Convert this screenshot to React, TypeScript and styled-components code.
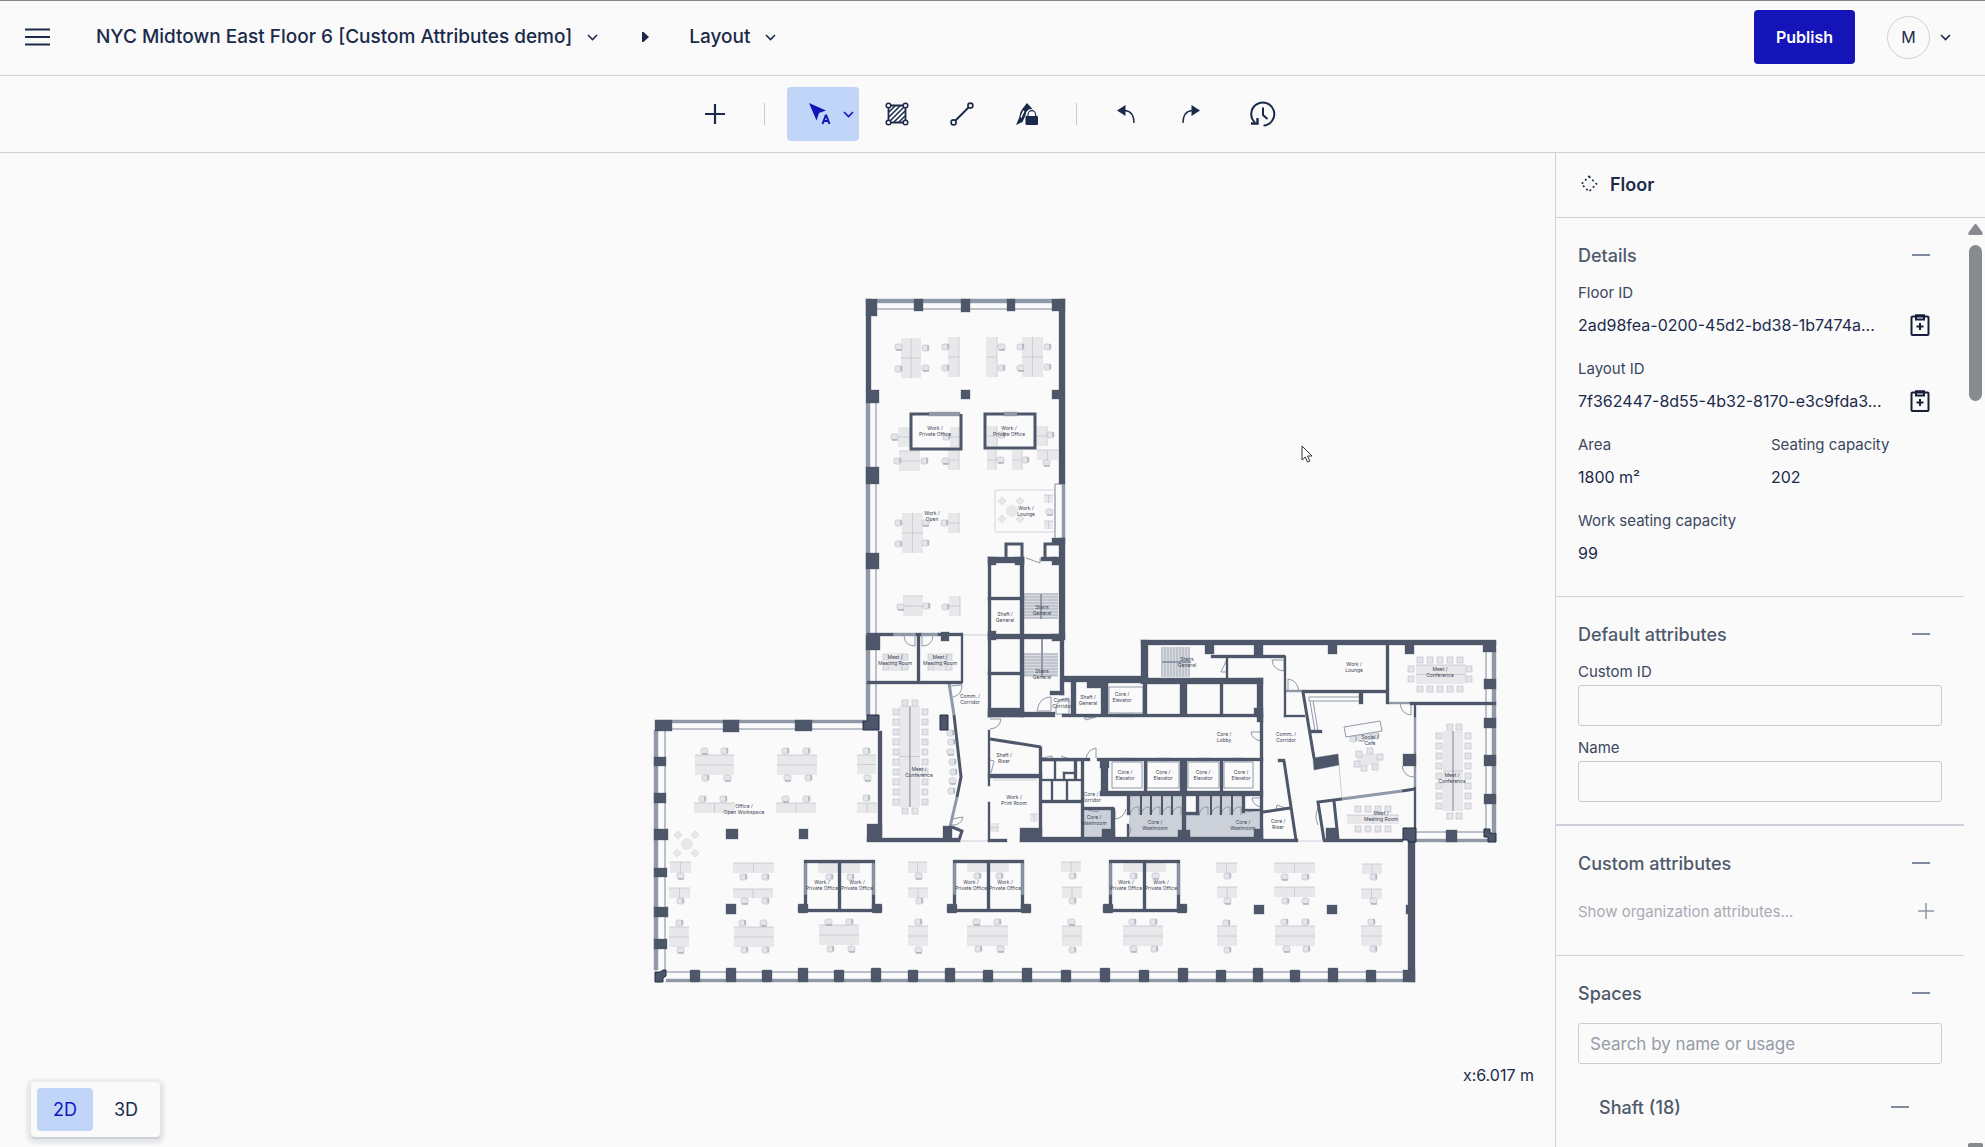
import React from "react";
import styled, { createGlobalStyle } from "styled-components";

const ink = "#1b2a4a";
const line = "#cdd0d9";
const wall = "#4e576a";
const glass = "#9099a8";
const thin = "#a6adb9";
const desk = "#e8e8eb";

const Global = createGlobalStyle`
  * { box-sizing: border-box; }
  body { margin: 0; background: #fafafa; }
  button, input { font: inherit; color: inherit; }
  button { background: none; border: 0; padding: 0; cursor: pointer; }
  svg { display: block; }
  h1, h2, dl, dt, dd { margin: 0; font: inherit; }
`;

const Page = styled.div`
  height: 100vh;
  display: flex;
  flex-direction: column;
  overflow: hidden;
  background: #fafafa;
  color: ${ink};
  font-family: Inter, "Liberation Sans", sans-serif;
  font-size: 16px;
`;

const Header = styled.header`
  display: flex;
  align-items: center;
  flex: none;
  height: 76px;
  padding: 0 34px 2px 24px;
  border-top: 1px solid #85868f;
  border-bottom: 1px solid ${line};
`;

const MenuButton = styled.button`
  width: 27px;
  margin-right: 45px;
`;

const Crumb = styled.button`
  display: flex;
  align-items: center;
  gap: 15px;
  font-size: 19px;
  line-height: 24px;
  font-weight: 500;
  white-space: nowrap;
`;

const CrumbArrow = styled.span`
  padding: 0 40px 0 44px;
`;

const Account = styled.div`
  display: flex;
  align-items: center;
  margin-left: auto;
`;

const Publish = styled.button`
  height: 54px;
  padding: 0 22px;
  border-radius: 4px;
  background: #1414b8;
  color: #fff;
  font-size: 16px;
  font-weight: 600;
`;

const Profile = styled.button`
  display: flex;
  align-items: center;
  gap: 10px;
  margin-left: 32px;
`;

const Avatar = styled.span`
  display: grid;
  place-items: center;
  width: 43px;
  height: 43px;
  border: 1px solid #d0d2d6;
  border-radius: 50%;
`;

const Toolbar = styled.div`
  display: flex;
  flex: none;
  align-items: center;
  justify-content: center;
  gap: 11px;
  height: 77px;
  padding-right: 8px;
  border-bottom: 1px solid ${line};
`;

const Tool = styled.button<{ $active?: boolean; $apart?: boolean }>`
  display: flex;
  align-items: center;
  justify-content: center;
  gap: 12px;
  width: ${(p) => (p.$active ? 72 : 54)}px;
  height: 54px;
  margin-left: ${(p) => (p.$apart ? 7 : 0)}px;
  padding-left: ${(p) => (p.$active ? 17 : 0)}px;
  border-radius: 4px;
  background: ${(p) => (p.$active ? "#c1d5f9" : "transparent")};
  color: ${(p) => (p.$active ? "#1414b8" : ink)};
`;

const ToolDivider = styled.span`
  width: 1px;
  height: 22px;
  margin: 0 11px;
  background: #c6cad2;
`;

const Body = styled.div`
  display: flex;
  flex: 1;
  min-height: 0;
`;

const Canvas = styled.main`
  position: relative;
  flex: 1;
  min-width: 0;
`;

const Plan = styled.svg`
  width: 100%;
  height: 100%;
`;

const Pointer = styled.svg`
  position: absolute;
  left: 1301px;
  top: 292px;
`;

const Coordinates = styled.output`
  position: absolute;
  right: 21px;
  bottom: 60px;
  line-height: 24px;
`;

const ViewSwitch = styled.div`
  position: absolute;
  left: 31px;
  bottom: 10px;
  display: flex;
  gap: 5px;
  padding: 6px;
  border-radius: 4px;
  background: #fafafa;
  box-shadow: 0 2px 2px rgba(40, 50, 70, 0.16), 0 2px 3px 5px rgba(40, 50, 70, 0.08);
`;

const ViewButton = styled.button<{ $on?: boolean }>`
  width: 56px;
  height: 43px;
  border-radius: 4px;
  font-size: 18px;
  background: ${(p) => (p.$on ? "#c1d5f9" : "transparent")};
  color: ${(p) => (p.$on ? "#1414c8" : ink)};
`;

const Panel = styled.aside`
  display: flex;
  flex: none;
  flex-direction: column;
  width: 430px;
  border-left: 1px solid ${line};
`;

const PanelHeader = styled.div`
  display: flex;
  flex: none;
  align-items: center;
  gap: 12px;
  height: 65px;
  padding: 0 0 2px 24px;
  border-bottom: 1px solid ${line};
  font-size: 18px;
  font-weight: 600;
`;

const PanelBody = styled.div`
  display: flex;
  flex: 1;
  min-height: 0;
`;

const Sections = styled.div`
  flex: 1;
  overflow: hidden;
`;

const Scrollbar = styled.div`
  display: flex;
  flex-direction: column;
  justify-content: space-between;
  align-items: center;
  width: 21px;
  padding: 6px 0 0 2px;
  overflow: hidden;
`;

const ScrollTop = styled.div`
  display: flex;
  flex-direction: column;
  align-items: center;
  gap: 10px;
`;

const Thumb = styled.div`
  width: 13px;
  height: 156px;
  border-radius: 7px;
  background: #878a8f;
`;

const ScrollEnd = styled.div`
  width: 15px;
  height: 4px;
  border-radius: 2px 2px 0 0;
  background: #878a8f;
`;

const Section = styled.section<{ $end: number; $rule?: number }>`
  padding: 25px 22px ${(p) => p.$end}px;
  border-bottom: ${(p) => p.$rule ?? 1}px solid ${line};
`;

const SectionHead = styled.div<{ $gap: number; $inset?: number }>`
  display: flex;
  align-items: center;
  justify-content: space-between;
  height: 24px;
  margin: 0 ${(p) => p.$inset ?? 0}px ${(p) => p.$gap}px;
  padding-right: 12px;
  color: #4f596b;
  font-size: 18px;
  font-weight: 500;
`;

const Facts = styled.dl`
  display: grid;
  grid-template-columns: 193px 1fr;
  row-gap: 22px;
`;

const Fact = styled.div<{ $wide?: boolean }>`
  grid-column: ${(p) => (p.$wide ? "1 / -1" : "auto")};
  display: grid;
  row-gap: 10px;
`;

const Term = styled.dt`
  font-size: 15px;
  line-height: 20px;
  color: #3b4760;
`;

const Value = styled.dd`
  display: flex;
  align-items: center;
  justify-content: space-between;
  height: 24px;
  padding-right: 12px;
`;

const Field = styled.div`
  display: flex;
  flex-direction: column;
  gap: 3px;
  & + & { margin-top: 12px; }
`;

const Label = styled.label`
  font-size: 15px;
  line-height: 20px;
  color: #3b4760;
`;

const Input = styled.input`
  width: 100%;
  height: 41px;
  padding: 0 11px;
  border: 1px solid #c9cbd1;
  border-radius: 3px;
  background: transparent;
  font-size: 17px;
  &::placeholder { color: #959ba7; opacity: 1; }
`;

const ShowMore = styled.button`
  display: flex;
  align-items: center;
  justify-content: space-between;
  width: 100%;
  height: 24px;
  padding-right: 8px;
  color: #a7abb4;
  font-size: 15px;
`;

const Group = styled.div`
  margin-top: 31px;
`;

const Chevron = () => (
  <svg width="11" height="7" viewBox="0 0 11 7" fill="none" stroke="currentColor" strokeWidth="1.6">
    <path d="M1 1l4.5 4.5L10 1" />
  </svg>
);

const Minus = () => (
  <svg width="18" height="18" viewBox="0 0 18 18" fill="none" stroke="#7f8a9a" strokeWidth="2">
    <path d="M0 9h18" />
  </svg>
);

const Clipboard = () => (
  <svg width="20" height="22" viewBox="0 0 20 22" fill="none" stroke="#141f36" strokeWidth="2">
    <rect x="1.5" y="2.5" width="17" height="18.5" rx="1" />
    <path d="M6 1.2h8v4.3H6zM10 9v7M6.5 12.500h7" />
  </svg>
);

type Box = [number, number, number, number];

/* Wall outlines as x1, y1, x2, y2 */
const solids: Box[] = [
  [866, 299, 877, 316], [866, 299, 871, 390], [1059, 299, 1065, 484],
  [914, 299, 923, 311], [961, 299, 970, 312], [1007, 299, 1015, 311], [1052, 299, 1065, 311],
  [866, 390, 879, 403], [866, 467, 879, 484], [866, 553, 879, 569], [866, 635, 880, 650],
  [961, 390, 970, 399], [1052, 390, 1060, 399],
  [1052, 538, 1065, 544], [1059, 538, 1065, 640], [1052, 557, 1060, 565],
  [988, 557, 991, 717], [988, 557, 1024, 563], [1020, 557, 1024, 717], [1041, 557, 1056, 561],
  [988, 597, 1024, 600], [988, 634, 1065, 639], [988, 672, 1024, 675], [988, 708, 1024, 717],
  [988, 712, 1055, 717], [988, 557, 996, 565], [1015, 557, 1024, 565], [988, 631, 996, 640], [1052, 634, 1060, 641],
  [1060, 638, 1064, 695], [1050, 691, 1064, 695],
  [867, 633, 893, 636], [916, 633, 921, 636], [938, 633, 962, 636], [867, 681, 962, 684],
  [917, 634, 920, 683], [961, 633, 963, 683], [941, 632, 949, 641],
  [878, 731, 882, 835], [867, 824, 882, 841], [867, 838, 960, 842], [943, 826, 952, 841],
  [988, 730, 990, 786], [988, 802, 990, 841], [988, 774, 1042, 778], [1039, 747, 1042, 840],
  [988, 839, 1007, 842], [1020, 828, 1042, 841], [1020, 837, 1263, 842],
  [1041, 759, 1082, 761], [1041, 779, 1082, 781], [1041, 800, 1082, 803], [1054, 760, 1056, 780],
  [1074, 760, 1077, 780], [1051, 780, 1053, 801], [1066, 780, 1068, 801], [1081, 760, 1084, 840],
  [1063, 772, 1076, 774], [1063, 772, 1065, 780],
  [1062, 676, 1148, 682], [1141, 640, 1148, 682], [1141, 640, 1496, 645], [1205, 645, 1214, 654],
  [1211, 655, 1285, 658], [1254, 645, 1263, 656], [1226, 658, 1228, 680],
  [1071, 678, 1076, 716], [1087, 680, 1108, 688], [1101, 680, 1108, 716], [1108, 678, 1146, 683], [1143, 678, 1147, 716],
  [1141, 678, 1263, 684], [1180, 680, 1187, 716], [1220, 680, 1223, 716], [1257, 678, 1263, 722], [1254, 708, 1263, 716],
  [1062, 714, 1263, 717], [1260, 716, 1263, 840],
  [1041, 758, 1090, 761], [1097, 758, 1263, 761], [1100, 760, 1109, 768], [1101, 760, 1108, 794], [1144, 760, 1147, 794],
  [1180, 760, 1187, 794], [1220, 760, 1223, 794], [1100, 791, 1263, 796], [1127, 796, 1130, 815], [1182, 796, 1186, 838],
  [1196, 796, 1199, 815], [1186, 812, 1199, 815], [1242, 796, 1245, 813], [1242, 809, 1262, 811], [1083, 807, 1114, 810], [1111, 808, 1115, 838],
  [1102, 829, 1115, 838], [1127, 824, 1129, 838], [1254, 829, 1263, 840], [1178, 830, 1190, 838],
  [1328, 645, 1337, 654], [1405, 645, 1414, 654], [1483, 641, 1496, 652], [1386, 644, 1389, 704],
  [1410, 702, 1496, 705], [1284, 656, 1286, 717], [1284, 715, 1305, 717], [1302, 690, 1388, 693],
  [1310, 730, 1322, 733], [1359, 691, 1363, 704], [1484, 679, 1496, 689], [1484, 718, 1496, 728],
  [1484, 755, 1496, 766], [1484, 794, 1496, 804], [1414, 703, 1416, 717], [1403, 754, 1416, 766],
  [1414, 787, 1416, 830], [1446, 830, 1457, 842], [1278, 759, 1285, 762], [1326, 828, 1338, 841], [1323, 839, 1403, 842],
  [1263, 839, 1298, 842], [1408, 842, 1415, 982], [1406, 905, 1410, 914], [1403, 970, 1415, 982],
  [655, 720, 672, 731], [723, 720, 739, 732], [795, 720, 812, 731],
  [654, 757, 666, 766], [654, 793, 666, 803], [654, 829, 668, 840], [654, 868, 667, 877], [654, 907, 668, 917], [654, 939, 667, 949],
  [726, 829, 738, 839], [799, 829, 808, 839], [726, 904, 736, 914], [1254, 905, 1264, 914], [1327, 905, 1337, 914],
];

const sillColumns = [690, 726, 762, 798, 834, 871, 908, 945, 983, 1022, 1061, 1100, 1139, 1178, 1216, 1253, 1290, 1328, 1366];
const booths = [804, 953, 1109];

const glazing: Box[] = [
  [877, 299, 1052, 303], [866, 403, 870, 715], [1062, 484, 1065, 538],
  [657, 720, 865, 723], [654, 730, 658, 970], [666, 979, 1404, 982],
  [929, 412, 960, 416], [1004, 412, 1017, 416], [893, 633, 916, 636], [921, 633, 938, 636],
  [1492, 650, 1496, 832], [1416, 839, 1490, 842], [1388, 702, 1410, 704], [1414, 717, 1416, 787], [1286, 690, 1302, 692],
  [1119, 714, 1133, 717], [1120, 758, 1134, 761], [1156, 758, 1170, 761], [1197, 758, 1211, 761], [1231, 758, 1245, 761],
];

const hairlines: Box[] = [
  [877, 309, 1052, 309], [876, 403, 876, 553], [876, 569, 876, 635], [876, 650, 876, 715],
  [1055, 484, 1055, 538], [1055, 484, 1065, 484], [672, 729, 865, 729], [665, 731, 665, 970], [666, 972, 1404, 972],
  [1486, 652, 1486, 830], [1416, 832, 1484, 832],
];

const thresholds: Box[] = [
  [963, 635, 988, 635], [960, 841, 988, 841], [1298, 841, 1322, 841],
  [1339, 765, 1342, 799], [993, 778, 1037, 778], [993, 780, 1037, 780],
];

const desks: Box[] = [
  [901, 338, 20, 40], [948, 337, 11, 40], [986, 337, 11, 40], [1022, 337, 21, 40],
  [898, 427, 12, 20], [899, 451, 21, 20], [948, 450, 11, 20], [950, 427, 9, 20], [987, 426, 10, 20], [987, 450, 9, 20],
  [1012, 450, 10, 20], [1036, 426, 11, 20], [1037, 450, 21, 10], [902, 513, 21, 40], [948, 513, 11, 20],
  [903, 596, 20, 20], [949, 596, 11, 20], [890, 653, 12, 18], [935, 653, 12, 18], [899, 706, 21, 101],
  [695, 755, 39, 20], [777, 755, 40, 20], [857, 755, 19, 19], [694, 803, 41, 10], [776, 803, 40, 10], [857, 803, 20, 10],
  [670, 862, 21, 11], [669, 888, 21, 10], [669, 927, 20, 20], [733, 863, 41, 10], [733, 889, 40, 9], [734, 927, 40, 20],
  [819, 925, 40, 20], [818, 863, 42, 10], [908, 862, 19, 11], [908, 888, 20, 10], [908, 926, 20, 20], [967, 862, 42, 10],
  [967, 926, 41, 20], [1061, 862, 20, 10], [1062, 887, 20, 11], [1062, 926, 20, 20], [1123, 862, 43, 10], [1123, 926, 40, 20],
  [1216, 863, 21, 10], [1217, 887, 20, 11], [1217, 926, 20, 20], [1274, 863, 41, 10], [1274, 887, 41, 10], [1275, 926, 40, 20],
  [1362, 864, 20, 10], [1361, 889, 21, 10], [1361, 926, 21, 20], [1416, 665, 50, 19], [1443, 731, 20, 80], [1347, 815, 52, 9],
  [1044, 495, 9, 8], [1044, 521, 9, 8], [990, 823, 8, 9], [1030, 814, 8, 8],
];

const chairs = `898,347 898,369 925,348 925,368 945,347 945,368 1001,347 1001,368 1020,347 1020,368 1047,347 1047,367
894,437 897,461 924,461 945,461 946,437 1001,435 1000,460 1025,460 1050,435 1046,463 898,523 898,544 925,523 925,543 944,523
900,607 926,606 945,607 704,751 724,751 705,778 727,778 785,751 806,751 787,778 808,778 866,751 867,778 702,799 723,799
785,799 806,799 866,798 680,876 680,901 679,923 680,950 743,877 765,877 744,901 765,901 742,923 763,923 744,950 765,950
828,922 849,922 830,949 851,949 829,877 850,877 918,876 919,901 918,922 918,950 977,876 999,876 976,922 997,922 978,949
1000,949 1072,876 1072,901 1071,922 1072,950 1133,876 1155,876 1132,922 1153,922 1133,949 1154,949 1227,876 1227,901
1226,923 1227,950 1284,877 1305,877 1285,901 1305,901 1284,922 1305,922 1286,949 1306,949 1373,877 1373,901 1371,922 1373,949
1049,512 950,733 951,742 950,752 952,762 953,772 952,781 951,791 1353,739 1361,738 1369,737 1375,736`
  .split(/\s+/)
  .map((s) => s.split(",").map(Number));

const range = (from: number, step: number, count: number) => Array.from({ length: count }, (_, i) => from + i * step);

const seats: number[][] = [
  ...range(712, 10, 10).flatMap((y) => [[896, y], [925, y]]),
  [905, 703], [915, 703], [905, 811], [915, 811],
  ...range(736, 10, 8).flatMap((y) => [[1439, y], [1468, y]]),
  [1450, 727], [1459, 727], [1450, 816], [1459, 816],
  ...range(1420, 10, 5).flatMap((x) => [[x, 660], [x, 689]]),
  [1411, 669], [1411, 679], [1469, 669], [1469, 679],
  ...range(1358, 10, 4).flatMap((x) => [[x, 809], [x, 829]]),
  [886, 657], [886, 667], [905, 657], [905, 667], [931, 657], [931, 667], [949, 657], [949, 667],
  [1359, 754], [1370, 751], [1380, 757], [1357, 764], [1364, 768], [1375, 767],
];

const lounge = [[1002, 501], [1020, 501], [1002, 519], [1020, 519], [678, 835], [695, 835], [677, 853], [695, 853]];

/* Door leaf and swing drawn from the hinge */
const doors = [
  "M915 636v10q-10 0-11-10", "M922 636v10q10 0 11-10", "M951 686l11-1q0 10-9 12", "M952 819l11-2q-2 9-12 8",
  "M990 719h11q-1 9-11 10", "M990 760l4 1-3 12", "M1026 558l14 5v-5", "M1051 697v14h-14q2-14 14-14", "M1056 711v-4q2-9 13-9v16h-13z",
  "M1084 718l12-1-10 3z", "M1096 758v-10q-9 2-10 11", "M1262 732h-11q1 8 11 9", "M1262 798h-10q1 8 10 9", "M1221 672l7-15M1221 672h6",
  "M1115 811v8q9-1 11-10", "M1088 810l10 2v-2", "M1042 758l10-2v3M1061 756l9 3", "M1272 660q1 10 12 11v-11z", "M1288 691v-12q9 1 11 12",
  "M1400 703q1 11 11 12v-12", "M1402 766q2 11 12 11", "M1276 810l1-5 11 4", "M1247 812l12-2", "M1318 808q-4 8 0 17", "M1129 826l2 4-3 7",
];

const labels: [number, number, string, string][] = [
  [935, 430, "Work /", "Private Office"], [1009, 430, "Work /", "Private Office"], [932, 515, "Work /", "Open"],
  [1026, 510, "Work /", "Lounge"], [1005, 616, "Shaft /", "General"], [1042, 609, "Stairs", "General"], [1042, 673, "Stairs", "General"],
  [895, 659, "Meet /", "Meeting Room"], [940, 659, "Meet /", "Meeting Room"], [970, 698, "Comm. /", "Corridor"], [919, 771, "Meet /", "Conference"],
  [744, 808, "Office /", "Open Workspace"], [822, 884, "Work /", "Private Office"], [857, 884, "Work /", "Private Office"],
  [971, 884, "Work /", "Private Office"], [1005, 884, "Work /", "Private Office"], [1126, 884, "Work /", "Private Office"], [1161, 884, "Work /", "Private Office"],
  [1004, 757, "Shaft /", "Riser"], [1014, 799, "Work /", "Print Room"], [1062, 702, "Comm.", "Corridor"], [1088, 699, "Shaft /", "General"],
  [1122, 696, "Core /", "Elevator"], [1187, 661, "Stairs", "General"], [1224, 736, "Core /", "Lobby"], [1286, 736, "Comm. /", "Corridor"],
  [1125, 774, "Core /", "Elevator"], [1163, 774, "Core /", "Elevator"], [1203, 774, "Core /", "Elevator"], [1241, 774, "Core /", "Elevator"],
  [1091, 796, "Core /", "Corridor"], [1094, 819, "Core /", "Washroom"], [1155, 824, "Core /", "Washroom"], [1243, 824, "Core /", "Washroom"],
  [1278, 823, "Core /", "Riser"], [1354, 666, "Work /", "Lounge"], [1440, 671, "Meet /", "Conference"], [1452, 777, "Meet /", "Conference"],
  [1370, 739, "Social /", "Cafe"], [1381, 815, "Meet /", "Meeting Room"],
];

const fillBox = ([x1, y1, x2, y2]: Box, i: number) => <rect key={i} x={x1} y={y1} width={x2 - x1} height={y2 - y1} />;
const strokeLine = ([x1, y1, x2, y2]: Box, i: number) => <line key={i} x1={x1} y1={y1} x2={x2} y2={y2} />;

const FloorPlan = () => (
  <Plan viewBox="0 153 1555 994" role="img" aria-label="Floor plan">
    <path fill="#ccd0d8" d="M1083 810h28v28h-28zM1129 796h53v42h-53zM1186 815h12v-19h44v15h19v27h-75z" />
    <path fill="#d9dbe0" d="M1024 593h34v26h-34zM1024 653h34v24h-34zM1161 647h29v30h-29z" />
    <g fill={desk}>
      {desks.map(([x, y, w, h], i) => <rect key={i} x={x} y={y} width={w} height={h} />)}
      {lounge.map(([x, y], i) => <path key={i} stroke="#cfd2d8" strokeWidth="0.6" d={`M${x} ${y - 4}l4 4-4 4-4-4z`} />)}
      <circle cx="1012" cy="511" r="6" />
      <circle cx="687" cy="844" r="6" />
      <ellipse cx="1369" cy="759" rx="12" ry="6" />
    </g>
    <g fill="none" stroke="#c3c7cf" strokeWidth="0.8">
      {desks.map(([x, y, w, h], i) =>
        h >= 18 && w >= 19 ? (
          <path key={i} d={h > w ? `M${x + w / 2} ${y}v${h}M${x} ${y + h / 2}h${w}` : `M${x} ${y + h / 2}h${w}M${x} ${y}h${w}`} />
        ) : (
          <path key={i} d={h > w ? `M${x} ${y + h / 2}h${w}M${x + w} ${y}v${h}` : `M${x + w / 2} ${y}v${h}M${x} ${y}h${w}`} />
        )
      )}
    </g>
    <path d="M910 706v101M1453 731v80" stroke="#8b93a2" />
    <g fill="#e4e5e9" stroke="#bfc3cc" strokeWidth="0.7">
      {chairs.map(([x, y], i) => (
        <g key={i}>
          <rect x={x - 3} y={y - 3} width="7" height="6" rx="2" />
          <path d={i % 3 ? `M${x + 3} ${y - 3}v5` : `M${x - 2} ${y + 3}h6`} stroke="#7d8594" />
        </g>
      ))}
      {seats.map(([x, y], i) => <rect key={i} x={x - 3} y={y - 3} width="6" height="6" />)}
    </g>
    <rect x="995" y="490" width="60" height="42" rx="1" fill="none" stroke="#d3d5da" />
    <g stroke={thin} strokeWidth="1.5">{hairlines.map(strokeLine)}</g>
    <g stroke="#ccd0d6">{thresholds.map(strokeLine)}</g>
    <g stroke={thin}>
      {range(594, 3, 9).map((y) => <path key={y} d={`M1024 ${y}h34`} />)}
      {range(654, 3, 8).map((y) => <path key={y} d={`M1024 ${y}h34`} />)}
      {range(1162, 3, 10).map((x) => <path key={x} d={`M${x} 647v30`} />)}
      <path d="M1041 594v25M1042 638v39M1162 662h29" stroke={glass} strokeWidth="2" />
    </g>
    <g fill={glass} stroke={glass} strokeOpacity="0.4">{glazing.map(fillBox)}</g>
    <g fill="none" stroke={glass} strokeWidth="1">
      {doors.map((d) => <path key={d} d={d} />)}
      <path d="M1109 687h34v26h-34zM1112 762h30v26h-30zM1147 762h32v26h-32zM1188 762h31v26h-31zM1224 762h29v26h-29z" />
      <path d="M1309 697h51v4h-51zM1310 701l5 30h3l-5-30M1344 727l36-6 2 10-36 6z" />
      {[1130, 1141, 1151, 1162, 1172, 1199, 1211, 1221, 1232].map((x) => (
        <path key={x} d={`M${x} 815q2-9 9-8v8`} />
      ))}
      {[1141, 1151, 1162, 1172, 1211, 1221, 1232].map((x) => (
        <path key={x} strokeWidth="2" stroke={wall} d={`M${x} 796v19`} />
      ))}
      <path strokeWidth="3" d="M949 683l5 32M957 797l-7 30M1342 799l60-8" />
    </g>
    <g fill={wall} stroke={wall} strokeOpacity="0.35">
      {solids.map(fillBox)}
      {sillColumns.map((x, i) => <rect key={x} x={x} y={i % 2 ? 968 : 970} width="10" height={i % 2 ? 14 : 12} rx="1" />)}
      {booths.map((x) => (
        <g key={x}>
          <path d={`M${x} 860h71v3h-71zM${x} 909h71v3h-71zM${x + 34} 861h3v50h-3zM${x} 895h3v16h-3zM${x + 68} 895h3v16h-3z`} />
          <rect x={x - 6} y="904" width="10" height="9" rx="1" />
          <rect x={x + 68} y="904" width="10" height="9" rx="1" />
          <path fill={glass} d={`M${x} 863h3v32h-3zM${x + 68} 863h3v32h-3z`} />
        </g>
      ))}
      <path d="M1313 758l25-4 1 11-25 5z" />
    </g>
    <g fill="none" stroke={wall} strokeWidth="3">
      <path d="M929 414h-18v35h50v-35M1004 414h-19v34h50v-34h-18M1006 557v-13h16v13M1045 557v-13h15" />
      <path d="M954 715l7 62-4 20M952 827l10 4-3 9M990 739l51 8" />
      <path d="M1303 692l11 66M1284 761l12 79M1263 812l27-4M1342 799l-24 3 6 38M1334 801l4 38M1402 791l13-2" />
    </g>
    <g fill={wall} stroke="#1f2b47" strokeWidth="1">
      <path d="M867 715h12v15h-16v-9h4zM940 715h8v15h-8zM1403 828h13v14h-8v-2h-5zM1484 829h6v4h6v9h-8v-5h-4zM655 972h5l3-2h3v6l-3 2v4h-8z" />
    </g>
    <g fill="#3c4454" fontSize="5" fontFamily="Inter, 'Liberation Sans', sans-serif" textAnchor="middle">
      {labels.map(([x, y, a, b], i) => (
        <text key={i} x={x} y={y}>
          {a}
          <tspan x={x} dy="6">{b}</tspan>
        </text>
      ))}
    </g>
  </Plan>
);

const CopyButton = ({ label }: { label: string }) => (
  <button aria-label={label}><Clipboard /></button>
);

const Head = ({ title, gap, inset }: { title: string; gap: number; inset?: number }) => (
  <SectionHead $gap={gap} $inset={inset}>
    <h2>{title}</h2>
    <button aria-label={`Collapse ${title}`}><Minus /></button>
  </SectionHead>
);

export default function App() {
  return (
    <Page>
      <Global />
      <Header>
        <MenuButton aria-label="Menu">
          <svg width="27" height="18" viewBox="0 0 27 18" stroke={ink} strokeWidth="2"><path d="M1 1.500h25M1 9h25M1 16.500h25" /></svg>
        </MenuButton>
        <Crumb>NYC Midtown East Floor 6 [Custom Attributes demo] <Chevron /></Crumb>
        <CrumbArrow><svg width="7" height="10" viewBox="0 0 7 10" fill={ink}><path d="M0 0h1.500L7 5 1.500 10H0z" /></svg></CrumbArrow>
        <Crumb>Layout <Chevron /></Crumb>
        <Account>
          <Publish>Publish</Publish>
          <Profile aria-label="Account"><Avatar>M</Avatar><Chevron /></Profile>
        </Account>
      </Header>

      <Toolbar role="toolbar" aria-label="Drawing tools">
        <Tool aria-label="Add">
          <svg width="20" height="20" viewBox="0 0 20 20" stroke="currentColor" strokeWidth="2.200"><path d="M10 0v20M0 10h20" /></svg>
        </Tool>
        <ToolDivider />
        <Tool $active aria-label="Select">
          <svg width="22" height="22" viewBox="0 0 22 22" fill="none" stroke="currentColor" strokeWidth="2">
            <path d="M0 0l17 7.500-7 2.500-2.500 7.500z" fill="currentColor" stroke="none" />
            <path d="M13.500 21l3.200-8.500h.6L20.500 21M14.500 18h5" />
          </svg>
          <Chevron />
        </Tool>
        <Tool aria-label="Space">
          <svg width="24" height="24" viewBox="0 0 24 24" fill="none" stroke="currentColor" strokeWidth="1.500">
            <path d="M3.500 3.500h17v17h-17z" strokeWidth="1.800" />
            <path d="M4 10l6-6M4 15L15 4M4 20L20 4M9 20L20 9M14 20l6-6" />
            <g fill="#fafafa"><circle cx="3.500" cy="3.500" r="2.300" /><circle cx="20.500" cy="3.500" r="2.300" /><circle cx="3.500" cy="20.500" r="2.300" /><circle cx="20.500" cy="20.500" r="2.300" /></g>
          </svg>
        </Tool>
        <Tool aria-label="Line">
          <svg width="24" height="24" viewBox="0 0 24 24" fill="none" stroke="currentColor" strokeWidth="1.600">
            <circle cx="3.600" cy="20.400" r="2.500" /><circle cx="20.400" cy="3.600" r="2.500" /><path d="M5.500 18.500l13-13" strokeWidth="1.900" />
          </svg>
        </Tool>
        <Tool aria-label="Lock geometry">
          <svg width="24" height="24" viewBox="0 0 24 24" fill="currentColor">
            <path d="M12 1l6 6.500-2-.500q-5 .5-5.500 6.500l-1 2-2 4.500L1 23l3-7 1.500-6 2.500-4z" />
            <path d="M8 8.500l1.500.800-3 6.500-1.200-.500z" fill="#fafafa" />
            <path d="M13 15v-2.500a3.800 3.800 0 0 1 7.600 0V15" fill="none" stroke="currentColor" strokeWidth="1.200" />
            <rect x="10.500" y="14" width="12.500" height="9" rx="1" />
          </svg>
        </Tool>
        <ToolDivider />
        <Tool aria-label="Undo">
          <svg width="20" height="20" viewBox="0 0 20 20"><path d="M1 6.500L9.500 1v11z" fill="currentColor" /><path d="M9 6.500q9 1 9 12.500" fill="none" stroke="currentColor" strokeWidth="1.400" /></svg>
        </Tool>
        <Tool aria-label="Redo">
          <svg width="20" height="20" viewBox="0 0 20 20"><path d="M19 6.500L10.500 1v11z" fill="currentColor" /><path d="M11 6.500q-9 1-9 12.500" fill="none" stroke="currentColor" strokeWidth="1.400" /></svg>
        </Tool>
        <Tool $apart aria-label="History">
          <svg width="26" height="26" viewBox="0 0 26 26" fill="none" stroke="currentColor" strokeWidth="2">
            <path d="M13.500 24.500A11.500 11.500 0 1 0 5 21.500M13 6.500v7.500l4.500 4" /><path d="M1 22.500h6.500V17" strokeWidth="2.400" />
          </svg>
        </Tool>
      </Toolbar>

      <Body>
        <Canvas>
          <FloorPlan />
          <Pointer width="12" height="19" viewBox="0 0 12 19" fill="#fff" stroke="#30343c" aria-hidden="true">
            <path d="M1 1v14l3.300-3L6.500 17l2.300-1-2.200-5H11z" />
          </Pointer>
          <ViewSwitch>
            <ViewButton $on>2D</ViewButton>
            <ViewButton>3D</ViewButton>
          </ViewSwitch>
          <Coordinates>x:6.017 m</Coordinates>
        </Canvas>

        <Panel>
          <PanelHeader>
            <svg width="18" height="18" viewBox="0 0 18 18" fill="none" stroke={ink} strokeWidth="1.700" strokeDasharray="2 2.600"><path d="M9 1.500L16.500 9 9 16.500 1.500 9z" /></svg>
            <h1>Floor</h1>
          </PanelHeader>
          <PanelBody>
            <Sections>
              <Section $end={31}>
                <Head title="Details" gap={16} />
                <Facts>
                  <Fact $wide><Term>Floor ID</Term><Value>2ad98fea-0200-45d2-bd38-1b7474a... <CopyButton label="Copy floor ID" /></Value></Fact>
                  <Fact $wide><Term>Layout ID</Term><Value>7f362447-8d55-4b32-8170-e3c9fda3... <CopyButton label="Copy layout ID" /></Value></Fact>
                  <Fact><Term>Area</Term><Value>1800 m²</Value></Fact>
                  <Fact><Term>Seating capacity</Term><Value>202</Value></Fact>
                  <Fact $wide><Term>Work seating capacity</Term><Value>99</Value></Fact>
                </Facts>
              </Section>
              <Section $end={22} $rule={2}>
                <Head title="Default attributes" gap={16} />
                <Field><Label htmlFor="custom-id">Custom ID</Label><Input id="custom-id" /></Field>
                <Field><Label htmlFor="name">Name</Label><Input id="name" /></Field>
              </Section>
              <Section $end={32}>
                <Head title="Custom attributes" gap={24} />
                <ShowMore>
                  Show organization attributes...
                  <svg width="16" height="16" viewBox="0 0 16 16" stroke="#8f96a3" strokeWidth="1.500"><path d="M8 0v16M0 8h16" /></svg>
                </ShowMore>
              </Section>
              <Section $end={32}>
                <Head title="Spaces" gap={18} />
                <Input aria-label="Search spaces" placeholder="Search by name or usage" />
                <Group><Head title="Shaft (18)" gap={16} inset={21} /></Group>
              </Section>
            </Sections>
            <Scrollbar aria-hidden="true">
              <ScrollTop>
                <svg width="15" height="11" viewBox="0 0 15 11" fill="#878a8f"><path d="M6 1q1.500-2 3 0l5.500 7.500Q15.500 11 13 11H2Q-.5 11 .5 8.500z" /></svg>
                <Thumb />
              </ScrollTop>
              <ScrollEnd />
            </Scrollbar>
          </PanelBody>
        </Panel>
      </Body>
    </Page>
  );
}
